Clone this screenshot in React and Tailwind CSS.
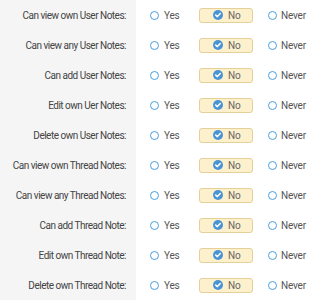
const rows = [
  'Can view own User Notes:',
  'Can view any User Notes:',
  'Can add User Notes:',
  'Edit own Uer Notes:',
  'Delete own User Notes:',
  'Can view own Thread Notes:',
  'Can view any Thread Notes:',
  'Can add Thread Note:',
  'Edit own Thread Note:',
  'Delete own Thread Note:',
];

const Radio = () => (
  <span className="w-[9px] h-[9px] rounded-full border-[1.5px] border-[#4a9fe0] bg-white inline-block shrink-0" />
);

const Checked = () => (
  <svg width="10" height="10" viewBox="0 0 10 10" className="shrink-0">
    <circle cx="5" cy="5" r="5" fill="#4a94d6" />
    <path d="M2.7 5.1 L4.4 6.6 L7.3 3.6" stroke="#fff" strokeWidth="1.5" fill="none" strokeLinecap="round" strokeLinejoin="round" />
  </svg>
);

export default function App() {
  return (
    <div className="w-[315px] h-[300px] bg-white flex flex-col overflow-hidden text-[10px] tracking-[-0.2px] text-[#555] whitespace-nowrap" style={{ fontFamily: 'Roboto, "Noto Sans", sans-serif' }}>
      {rows.map((label) => (
        <div key={label} className="flex h-[30px] items-center">
          <div className="w-[136px] shrink-0 h-full bg-[#f5f5f5] flex items-center justify-end pr-[10px] text-[#444] tracking-[-0.5px]">
            {label}
          </div>
          <div className="flex items-center h-full">
            <label className="flex items-center gap-[5px] ml-[14px] w-[49px] shrink-0">
              <Radio />
              <span>Yes</span>
            </label>
            <label className="flex items-center gap-[5px] w-[54px] shrink-0 h-[15px] bg-[#fdf0cc] border border-[#e6d09a] rounded-[3px] pl-[13px] text-[#666]">
              <Checked />
              <span>No</span>
            </label>
            <label className="flex items-center gap-[4px] ml-[15px] shrink-0">
              <Radio />
              <span>Never</span>
            </label>
          </div>
        </div>
      ))}
    </div>
  );
}
